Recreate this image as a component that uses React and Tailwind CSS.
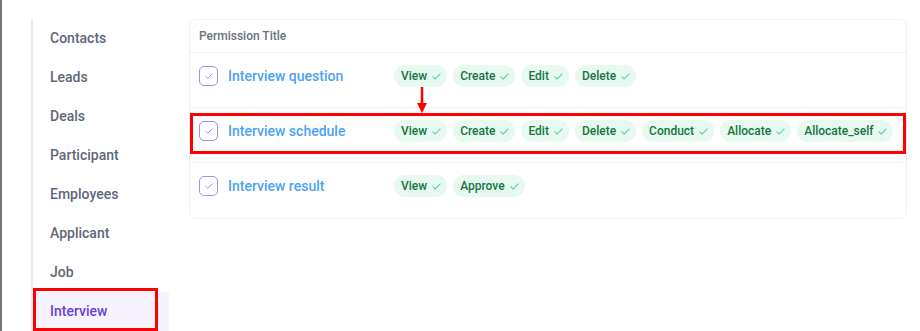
import React from 'react';

const navItems = ['Contacts', 'Leads', 'Deals', 'Participant', 'Employees', 'Applicant', 'Job', 'Interview'];

const permissions = [
  { title: 'Interview question', actions: ['View', 'Create', 'Edit', 'Delete'] },
  {
    title: 'Interview schedule',
    actions: ['View', 'Create', 'Edit', 'Delete', 'Conduct', 'Allocate', 'Allocate_self'],
    marked: true,
  },
  { title: 'Interview result', actions: ['View', 'Approve'] },
];

const Check = ({ className, width = '2.5' }) => (
  <svg viewBox="0 0 24 24" fill="none" stroke="currentColor" strokeWidth={width} strokeLinecap="round" strokeLinejoin="round" className={className}>
    <path d="M4 12.5l5 5L20 6.5" />
  </svg>
);

const Badge = ({ label }) => (
  <span className="flex items-center gap-[4px] h-[22px] pl-[7px] pr-[5px] rounded-full bg-[#e7f9f0] text-[#16753f] text-[12px] font-medium">
    {label}
    <Check className="w-[11px] h-[11px] text-[#4fd3a3]" width="2.2" />
  </span>
);

const App = () => {
  return (
    <div className="relative flex w-[920px] h-[331px] bg-white overflow-hidden font-['Roboto',sans-serif]">
      {/* left edge of the window behind */}
      <div className="w-[2px] h-full bg-[#767676] shrink-0" />

      {/* Sidebar */}
      <aside className="ml-[29px] mt-[19px] w-[138px] shrink-0 border-l-2 border-[#e8ebf1] flex flex-col">
        {navItems.map((item) => {
          const active = item === 'Interview';
          return (
            <div
              key={item}
              className={`h-[39px] flex items-center pl-[17px] text-[14px] font-medium ${
                active ? 'bg-[#f6f3ff] text-[#6a3fd4]' : 'text-[#5f677a]'
              }`}
            >
              {item}
            </div>
          );
        })}
      </aside>

      {/* Main */}
      <main className="flex-1 min-w-0 pl-[20px] pt-[19px] pr-[13px]">
        <div className="rounded-[7px] border border-[#eeeff3] bg-white">
          <div className="h-[33px] flex items-center pl-[9px] text-[12px] font-medium text-[#6b7282] border-b border-[#f0f1f4]">
            Permission Title
          </div>
          {permissions.map((p, i) => (
            <div
              key={p.title}
              className={`h-[55px] flex items-start pt-[12px] pl-[9px] ${i < permissions.length - 1 ? 'border-b border-[#f0f1f4]' : ''}`}
            >
              <div className="h-[22px] flex items-center">
                <span className="w-[19px] h-[20px] rounded-[5px] border border-[#a88ae8] flex items-center justify-center">
                  <Check className="w-[10px] h-[10px] text-[#9a82d8]" width="2" />
                </span>
                <span className="ml-[10px] w-[166px] text-[14px] font-medium text-[#4ea2f3]">{p.title}</span>
              </div>
              <div className="flex gap-[6px]">
                {p.actions.map((a) => (
                  <Badge key={a} label={a} />
                ))}
              </div>
            </div>
          ))}
        </div>
      </main>

      {/* Annotations */}
      <div className="absolute left-[33px] top-[288px] w-[125px] h-[43px] border-[3px] border-[#ff0000]" />
      <div className="absolute left-[190px] top-[113px] w-[716px] h-[41px] border-[3px] border-[#ff0000]" />
      <svg className="absolute left-[416px] top-[87px]" width="12" height="27" viewBox="0 0 12 27">
        <line x1="6" y1="0" x2="6" y2="18" stroke="#ff0000" strokeWidth="2.5" />
        <polygon points="1,16 11,16 6,26" fill="#ff0000" />
      </svg>
    </div>
  );
};

export default App;
